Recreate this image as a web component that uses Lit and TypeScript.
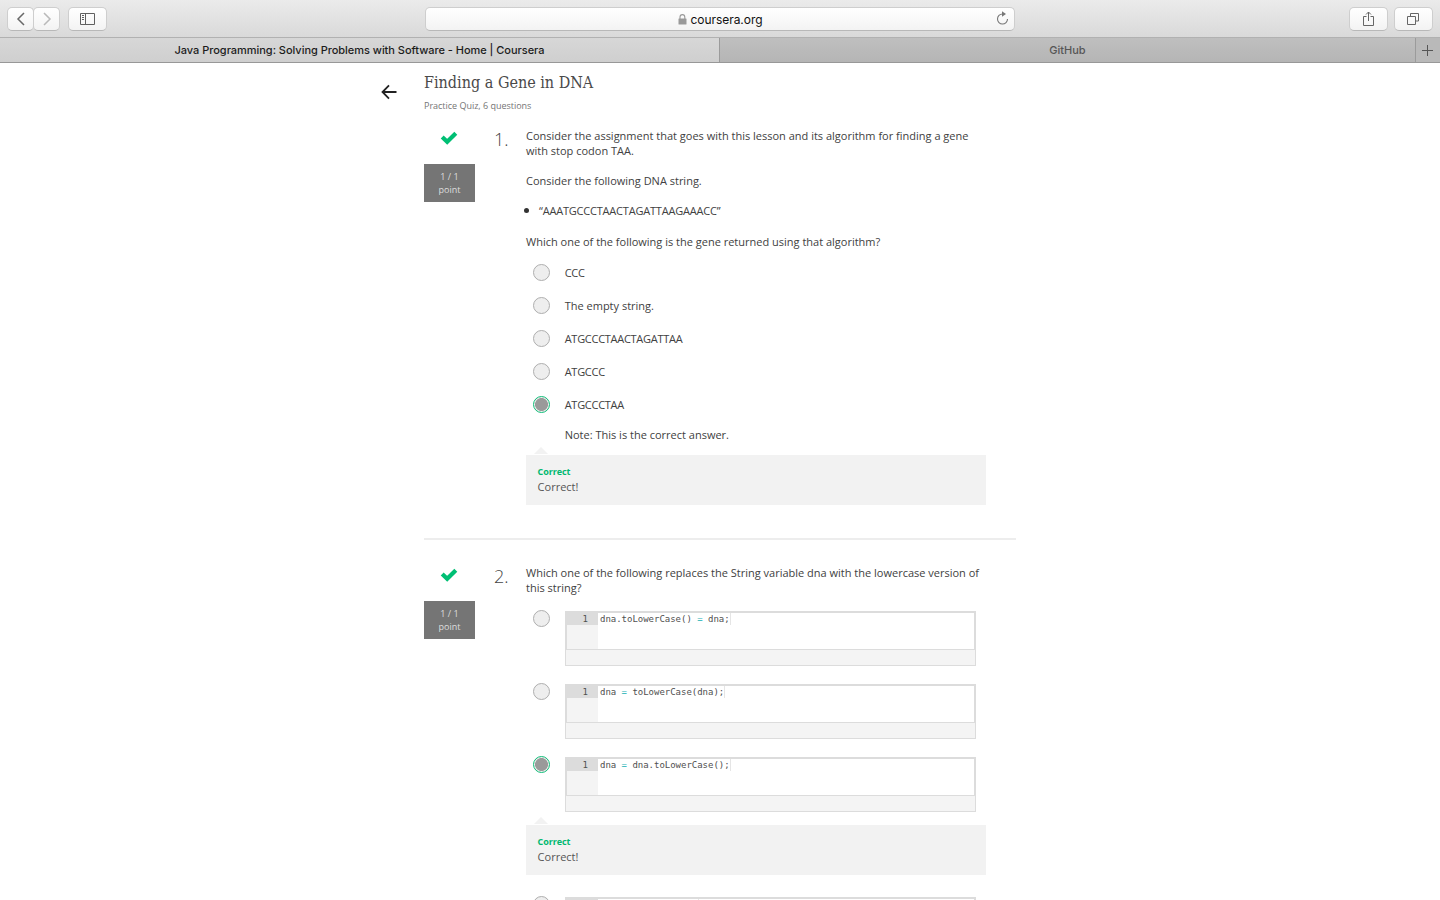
import { LitElement, html, css } from "lit";
import { customElement, property } from "lit/decorators.js";

const radioStyles = css`
  .radio { width: 17px; height: 17px; flex: none; box-sizing: border-box; border: 1px solid #aeaeae; border-radius: 50%; background: #eeeeee; }
  .radio.on { border-color: #0fbc78; background: radial-gradient(circle, #9a9a9a 0 6.1px, #eeeeee 6.8px); }
`;

@customElement("safari-chrome")
class SafariChrome extends LitElement {
  static styles = css`
    :host { display: block; font-family: Inter, sans-serif; }
    * { box-sizing: border-box; }
    svg { display: block; fill: none; }
    .bar { height: 38px; display: grid; grid-template-columns: 425px 590px 1fr; align-items: center; background: linear-gradient(#ebebeb, #d9d9d9); border-bottom: 1px solid #b1b1b1; }
    .group { display: flex; align-items: center; padding-left: 7px; }
    .right { justify-content: flex-end; padding: 0 7px 0 0; gap: 6px; }
    .btn { width: 39px; height: 24px; border: 1px solid #cecece; border-bottom-color: #b8b8b8; border-radius: 5px; background: linear-gradient(#ffffff, #f3f3f3); display: grid; place-items: center; }
    .btn.half { width: 27px; }
    .btn.join { margin-left: -1px; margin-right: 8px; }
    .address { height: 24px; border: 1px solid #cecece; border-bottom-color: #b8b8b8; border-radius: 5px; background: linear-gradient(#ffffff, #f3f3f3); display: grid; grid-template-columns: 1fr auto 1fr; align-items: center; padding-right: 5px; }
    .site { display: flex; align-items: center; gap: 4px; font-size: 12px; line-height: 20px; color: #111; letter-spacing: -0.05px; padding-top: 2px; padding-left: 5px; }
    .lock { margin-bottom: 1px; }
    .reload { justify-self: end; margin-bottom: 2px; }
    .tabs { height: 25px; display: grid; grid-template-columns: 719px 697px 24px; border-bottom: 1px solid #989898; font-size: 11px; line-height: 24px; text-align: center; white-space: nowrap; }
    .tab { background: linear-gradient(#d7d7d7, #cfcfcf); color: #1c1c1c; font-weight: 500; letter-spacing: -0.03px; }
    .tab.back { background: linear-gradient(#bfbfbf, #b5b5b5); border-left: 1px solid #9b9b9b; border-right: 1px solid #9b9b9b; color: #565656; letter-spacing: 0; }
    .add { background: #b9b9b9; display: grid; place-items: center; padding-right: 2px; }
  `;
  render() {
    return html`
      <div class="bar">
        <div class="group">
          <div class="btn half"><svg width="10" height="14" viewBox="0 0 10 14" stroke="#686868" stroke-width="1.5"><path d="M8 1 2 7l6 6"/></svg></div>
          <div class="btn half join"><svg width="10" height="14" viewBox="0 0 10 14" stroke="#b9b9b9" stroke-width="1.5"><path d="M2 1l6 6-6 6"/></svg></div>
          <div class="btn"><svg width="15" height="12" viewBox="0 0 15 12" stroke="#606060"><path d="M.5.5h14v11H.5zM5.500.5v11M2 2.500h2M2 4.500h2M2 6.500h2"/></svg></div>
        </div>
        <div class="address">
          <span></span>
          <div class="site">
            <svg class="lock" width="9" height="11" viewBox="0 0 9 11"><path d="M2 5V3a2.300 2.300 0 0 1 4.800 0v2" stroke="#999" stroke-width="1.100"/><rect x=".5" y="4.500" width="8" height="6" rx=".5" fill="#999"/></svg>
            <span>coursera.org</span>
          </div>
          <svg class="reload" width="13" height="14" viewBox="0 0 13 14"><path d="M6.500 3A5 5 0 1 0 11.500 8" stroke="#777" stroke-width="1.100"/><path d="M6 .3 10 3 6 5.700z" fill="#777"/></svg>
        </div>
        <div class="group right">
          <div class="btn"><svg width="13" height="16" viewBox="0 0 13 16" stroke="#666"><path d="M4.500 5.500h-3v9h10v-9h-3M6.500 10V1M4 3.500 6.500 1 9 3.500"/></svg></div>
          <div class="btn"><svg width="13" height="13" viewBox="0 0 13 13" stroke="#666"><path d="M.5 4.500h8v8h-8zM3.500 4V1.500h8v7.500H9"/></svg></div>
        </div>
      </div>
      <div class="tabs">
        <div class="tab">Java Programming: Solving Problems with Software - Home | Coursera</div>
        <div class="tab back">GitHub</div>
        <div class="add"><svg width="11" height="11" viewBox="0 0 11 11" stroke="#555"><path d="M5.500 0v11M0 5.500h11"/></svg></div>
      </div>
    `;
  }
}

@customElement("quiz-question")
class QuizQuestion extends LitElement {
  @property() number = "";
  static styles = css`
    :host { display: grid; grid-template-columns: 51px 51px 460px; width: 592px; }
    .score { display: flex; flex-direction: column; align-items: center; }
    .check { display: block; margin: 3px 1px 0 0; }
    .points { box-sizing: border-box; width: 51px; height: 38px; margin-top: 19px; padding-top: 6px; background: #757575; color: #dedede; font-size: 9px; line-height: 13px; text-align: center; }
    .number { font-size: 18px; font-weight: 300; line-height: 22px; color: #444; text-align: right; padding-right: 17.5px; }
  `;
  render() {
    return html`
      <div class="score">
        <svg class="check" width="18" height="14" viewBox="0 0 18 14"><path d="M2.200 6 7.200 10.800 15.800 2.300" fill="none" stroke="#00bf74" stroke-width="4.200" stroke-linejoin="miter"/></svg>
        <div class="points">1 / 1<br />point</div>
      </div>
      <div class="number">${this.number}</div>
      <div><slot></slot></div>
    `;
  }
}

@customElement("answer-feedback")
class AnswerFeedback extends LitElement {
  static styles = css`
    :host { display: block; width: 460px; }
    .tip { width: 0; margin-left: 8px; border: 7px solid transparent; border-top: 0; border-bottom-color: #f2f2f2; margin-bottom: 1px; }
    .box { box-sizing: border-box; height: 50px; padding: 9px 11.6px; background: #f2f2f2; line-height: 15px; color: #555; }
    .title { font-size: 9px; font-weight: 700; color: #00b870; letter-spacing: -0.1px; }
  `;
  render() {
    return html`<div class="tip"></div><div class="box"><div class="title">Correct</div><div>Correct!</div></div>`;
  }
}

@customElement("code-option")
class CodeOption extends LitElement {
  @property({ type: Array }) parts: string[] = [];
  @property({ type: Boolean }) checked = false;
  static styles = [radioStyles, css`
    :host { display: flex; padding-left: 7px; height: 73px; }
    .editor { box-sizing: border-box; margin: 1px 0 0 15px; width: 411px; height: 55px; border: 1px solid #dcdcdc; background: #f4f4f4; }
    .area { box-sizing: border-box; height: 38px; border: 1px solid #dcdcdc; display: grid; grid-template-columns: 31px 1fr; background: #fff; font: 9px/12px "DejaVu Sans Mono", monospace; color: #505050; }
    .gutter { background: #f4f4f4; }
    .line { height: 12px; background: #dcdcdc; text-align: right; padding-right: 10px; }
    .code { padding-left: 2px; white-space: pre; display: flex; letter-spacing: -0.02px; }
    .op { color: #14b0b4; }
    .blank { width: 98px; }
    .caret { width: 1px; height: 12px; background: #e5e5e5; }
  `];
  render() {
    const [left, right] = this.parts;
    return html`
      <div class="radio ${this.checked ? "on" : ""}"></div>
      <div class="editor"><div class="area">
        <div class="gutter"><div class="line">${left ? "1" : ""}</div></div>
        <div class="code">${left
          ? html`<span>${left} </span><span class="op">=</span><span> ${right}</span>`
          : html`<span class="blank"></span>`}<i class="caret"></i></div>
      </div></div>
    `;
  }
}

@customElement("app-root")
class AppRoot extends LitElement {
  static styles = [radioStyles, css`
    :host { display: block; width: 1440px; height: 900px; overflow: hidden; background: #fff; font: 11px/15px "Open Sans", sans-serif; color: #414141; }
    .page { display: grid; grid-template-columns: 43px 592px; padding-left: 381px; }
    .arrow { display: block; margin-top: 20.5px; }
    h1 { margin: 8px 0 0; font-weight: 400; font-size: 16px; line-height: 24px; font-stretch: condensed; font-family: "DejaVu Serif Condensed", "DejaVu Serif", serif; letter-spacing: 0; color: #4a4a4a; white-space: nowrap; }
    .sub { margin: 4px 0 0; font-size: 9px; line-height: 14px; color: #757575; letter-spacing: -0.02px; }
    .first { margin-top: 15px; }
    p { margin: 0 0 15px; white-space: nowrap; }
    ul { margin: 0 0 16px; padding: 0; list-style: none; }
    li { display: flex; align-items: center; gap: 10px; margin-left: -2px; }
    .dot { width: 5px; height: 5px; border-radius: 50%; background: #333; }
    .gene { letter-spacing: -0.2px; }
    .ask { margin-bottom: 7px; }
    .option { display: flex; align-items: center; gap: 14.7px; height: 33px; padding-left: 7px; }
    .option .gene { letter-spacing: -0.28px; }
    .note { margin: 6px 0 5px 38.7px; }
    .rule { height: 2px; background: #ededed; margin: 33px 0 25px; }
    .stem { margin-bottom: 15px; }
    .tight { height: 61px; }
    .gap { margin-bottom: 21px; }
  `];
  render() {
    const answers = ["CCC", "The empty string.", "ATGCCCTAACTAGATTAA", "ATGCCC", "ATGCCCTAA"];
    return html`
      <safari-chrome></safari-chrome>
      <div class="page">
        <svg class="arrow" width="16" height="16" viewBox="0 0 16 16" fill="none" stroke="#222" stroke-width="1.8"><path d="M15.500 8H2M8 1.300 1.500 8 8 14.700"/></svg>
        <main>
          <h1>Finding a Gene in DNA</h1>
          <div class="sub">Practice Quiz, 6 questions</div>
          <quiz-question class="first" number="1.">
            <p>Consider the assignment that goes with this lesson and its algorithm for finding a gene<br />with stop codon TAA.</p>
            <p>Consider the following DNA string.</p>
            <ul><li><span class="dot"></span><span class="gene">“AAATGCCCTAACTAGATTAAGAAACC”</span></li></ul>
            <p class="ask">Which one of the following is the gene returned using that algorithm?</p>
            ${answers.map((a, i) => html`<div class="option"><span class="radio ${i === 4 ? "on" : ""}"></span><span class=${i === 1 ? "" : "gene"}>${a}</span></div>`)}
            <p class="note">Note: This is the correct answer.</p>
            <answer-feedback></answer-feedback>
          </quiz-question>
          <div class="rule"></div>
          <quiz-question number="2.">
            <p class="stem">Which one of the following replaces the String variable dna with the lowercase version of<br />this string?</p>
            <code-option .parts=${["dna.toLowerCase()", "dna;"]}></code-option>
            <code-option .parts=${["dna", "toLowerCase(dna);"]}></code-option>
            <code-option class="tight" checked .parts=${["dna", "dna.toLowerCase();"]}></code-option>
            <answer-feedback class="gap"></answer-feedback>
            <code-option></code-option>
          </quiz-question>
        </main>
      </div>
    `;
  }
}
